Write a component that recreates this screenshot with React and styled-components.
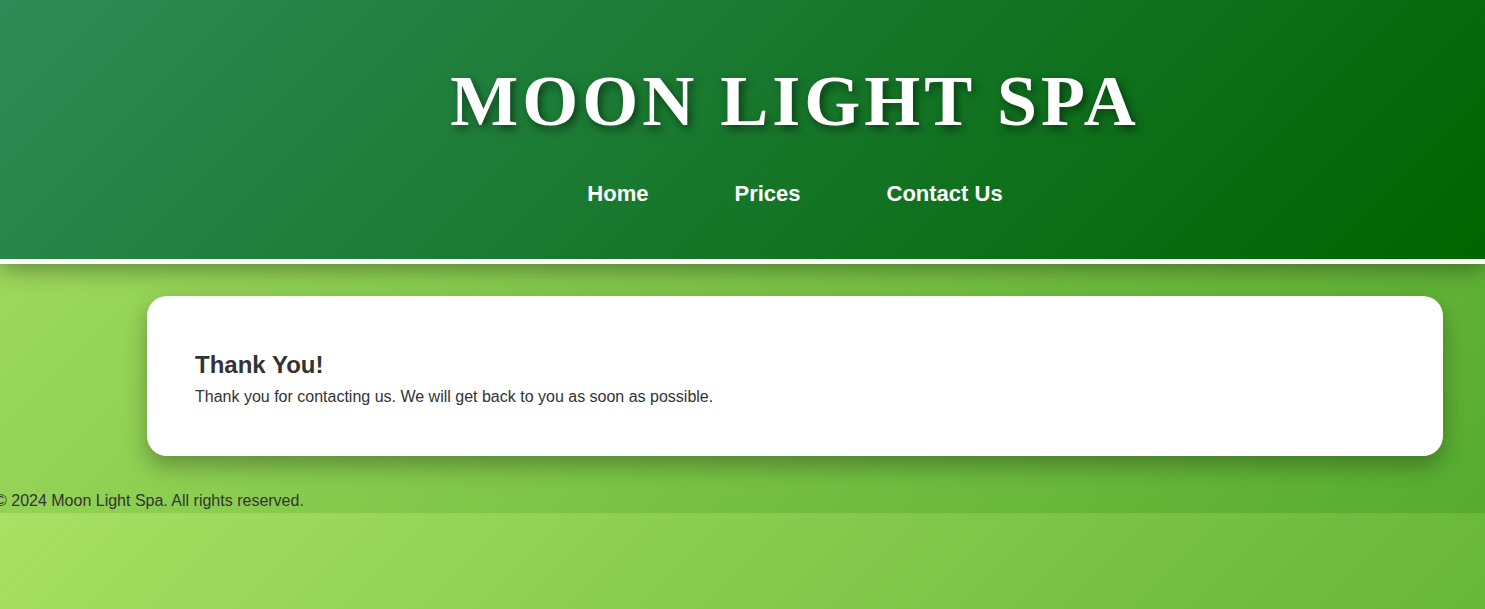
import React from "react";
import styled, { createGlobalStyle } from "styled-components";

const GlobalStyle = createGlobalStyle`
  body {
    margin: 0;
    font-family: "Liberation Sans", Arial, sans-serif;
    color: #333;
    background: linear-gradient(135deg, #a8e063, #56ab2f);
  }
`;

const Header = styled.header`
  background: linear-gradient(135deg, #2e8b57, #006400);
  border-bottom: 5px solid #fff;
  box-shadow: 0 6px 22px rgba(0, 0, 0, 0.35);
  padding: 60px 0 52px 105px;
  text-align: center;
  position: relative;
  z-index: 1;
`;

const Title = styled.h1`
  margin: 0;
  font-family: "Liberation Serif", "Times New Roman", serif;
  font-weight: bold;
  font-size: 72px;
  letter-spacing: 4px;
  color: #fff;
  text-shadow: 3px 4px 8px rgba(0, 0, 0, 0.5);
`;

const Nav = styled.nav`
  margin-top: 38px;
  display: flex;
  justify-content: center;
  gap: 86px;
`;

const NavLink = styled.a`
  color: #fff;
  font-size: 22px;
  font-weight: bold;
  text-decoration: none;
`;

const Main = styled.main`
  padding: 32px 42px 36px 147px;
`;

const Card = styled.section`
  background: #fff;
  border-radius: 20px;
  padding: 50px 48px 50px;
  box-shadow: 0 10px 22px rgba(0, 0, 0, 0.3);
`;

const Heading = styled.h2`
  margin: 5px 0 9px;
  font-size: 24px;
  font-weight: bold;
  color: #333;
`;

const Text = styled.p`
  margin: 0;
  font-size: 16px;
  color: #333;
`;

const Footer = styled.footer`
  padding: 0 0 3px;
  margin-left: -5px;
  font-size: 16px;
  color: #333;
`;

export default function App() {
  return (
    <>
      <GlobalStyle />
      <Header>
        <Title>MOON LIGHT SPA</Title>
        <Nav>
          <NavLink href="#">Home</NavLink>
          <NavLink href="#">Prices</NavLink>
          <NavLink href="#">Contact Us</NavLink>
        </Nav>
      </Header>
      <Main>
        <Card>
          <Heading>Thank You!</Heading>
          <Text>Thank you for contacting us. We will get back to you as soon as possible.</Text>
        </Card>
      </Main>
      <Footer>© 2024 Moon Light Spa. All rights reserved.</Footer>
    </>
  );
}
